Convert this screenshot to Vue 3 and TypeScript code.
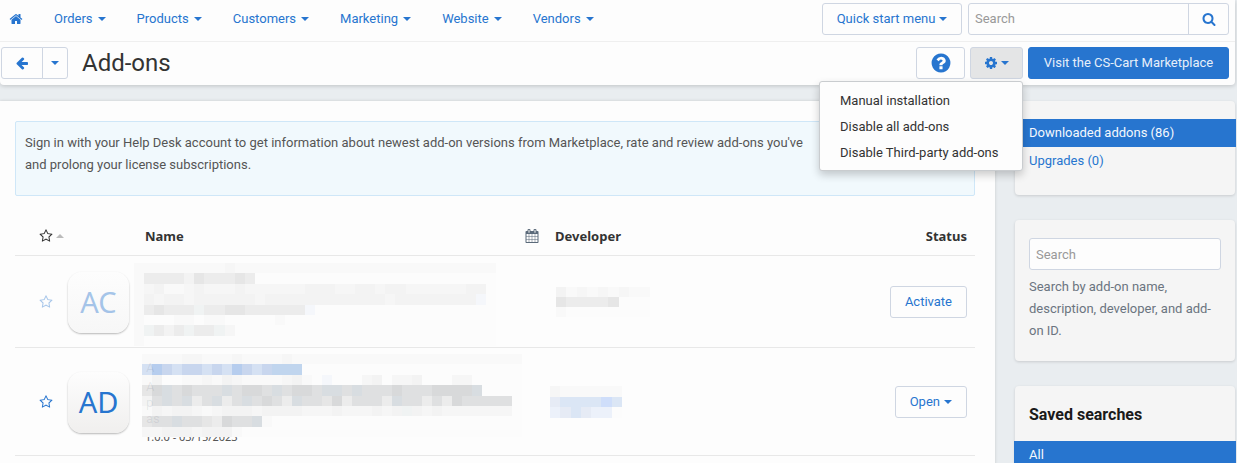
<script setup lang="ts">
import { ref } from 'vue'

type Mosaic = { cols: number; rows: string[] }

const menus: string[] = ['Orders', 'Products', 'Customers', 'Marketing', 'Website', 'Vendors']
const tools: string[] = ['Manual installation', 'Disable all add-ons', 'Disable Third-party add-ons']
const quickSearch = ref('')
const addonSearch = ref('')

const palette: Record<string, string> = {
  w: '#fcfcfc', a: '#f9f9f9', b: '#f6f6f6', c: '#f3f3f3', d: '#ececec', e: '#e6e6e6',
  f: '#dfe0e1', g: '#d8d9da', h: '#d8dde1', t: '#f0f3f3', l: '#f5f7fb',
  '1': '#b6cdee', '2': '#c8d6ee', '3': '#d5e1f3', '4': '#c0d5ee',
  '5': '#dbe6f5', '6': '#e6ebf5', '7': '#ecf1fa', '8': '#cfdefa',
}

const nameFirst: Mosaic = {
  cols: 36,
  rows: [
    'aaaaaaaaabaaaaaaaaaaaaaaaaaaaaaaaaaa',
    'addddcedddedwwwwwwwwwwwwwwwwwwwwwwww',
    'abcaabcbbbcbbbbbbcccbbccbccbbbbbbccw',
    'acbccbccccccbccccccccccccbccccccccl'.padEnd(36, 'w'),
    'adedddtddeeddddddlwwwwwwwwwwwwwwwwww',
    'awwwaawaawwwwwawwwwwwwwwwwwwwwwwwwww',
    'atdcdtddtbwwwwwwwwwwwwwwwwwwwwwwwwww',
    'awwwwwwwwwwwwwwwwwwwwwwwwwwwwwwwwwww',
  ],
}
const nameSecond: Mosaic = {
  cols: 38,
  rows: [
    'aaaabbaaabaaaabaaaaaaaaaaaaaaaaaaaaaaa',
    '3123223231232444' + 'w'.repeat(22),
    'acwwaabacbaaaabcawlwwwbcwbbcwwwbbwwwww',
    'eghfgfffhfggfhfggfhhfhfffgfffgggghwwww',
    'cfhfhdfhdfhfgfdhffegdfffdhffdfdgfffffw',
    'acbccbabcccbccccbbbcbbbcbctcbcbbbbbbbw',
    'effhffedgffhawwwwwwwwwwwwwwwwwwwwwwwww',
    'bbcccbcccawwwwwwwwwwwwwwwwwwwwwwwwwwww',
  ],
}
const devFirst: Mosaic = { cols: 9, rows: ['cabababaa', 'eddddewww', 'awwwwwwww'] }
const devSecond: Mosaic = { cols: 7, rows: ['baaaaaa', '6555585', '765677w'] }

const rowsData = [
  { initials: 'AC', active: false, action: 'Activate', caret: false, version: '', name: nameFirst, dev: devFirst, key: 'first', hints: [] as [string, number][] },
  { initials: 'AD', active: true, action: 'Open', caret: true, version: '1.0.0 - 03/15/2023', name: nameSecond, dev: devSecond, key: 'second', hints: [['A', 18], ['A', 37], ['p', 53], ['as', 69]] as [string, number][] },
]

const star = 'M1201 1004l306-297-422-62-189-382-189 382-422 62 306 297-73 421 378-199 377 199zm527-357q0 22-26 48l-363 354 86 500q1 7 1 20 0 50-41 50-19 0-40-12l-449-236-449 236q-22 12-40 12-21 0-31.5-14.5t-10.5-35.5q0-6 2-20l86-500-364-354q-25-27-25-48 0-37 56-46l502-73 225-455q19-41 49-41t49 41l225 455 502 73q56 9 56 46z'
</script>

<template>
  <div class="page">
    <header class="header">
      <div class="topbar">
        <nav class="nav">
          <a class="home" href="#" aria-label="Home">
            <svg class="ico14" viewBox="0 0 1792 1792"><path d="M1472 992v480q0 26-19 45t-45 19h-384v-384h-256v384h-384q-26 0-45-19t-19-45v-480q0-1 .5-3t.5-3l575-474 575 474q1 2 1 6zm223-69l-62 74q-8 9-21 11h-3q-13 0-21-7l-692-577-692 577q-12 8-24 7-13-2-21-11l-62-74q-8-10-7-23.5t11-21.5l719-599q32-26 76-26t76 26l244 204v-195q0-14 9-23t23-9h192q14 0 23 9t9 23v408l219 182q10 8 11 21.5t-7 23.5z" /></svg>
          </a>
          <a v-for="m in menus" :key="m" class="menu" href="#">{{ m }}<i class="caret"></i></a>
        </nav>
        <div class="top-tools">
          <button class="btn quick" type="button">Quick start menu<i class="caret"></i></button>
          <form class="search" @submit.prevent>
            <input v-model="quickSearch" class="field" type="text" placeholder="Search" aria-label="Search">
            <button class="go" type="submit" aria-label="Find">
              <svg class="ico14" viewBox="0 0 1792 1792"><path d="M1216 832q0-185-131.5-316.5t-316.5-131.5-316.5 131.5-131.5 316.5 131.5 316.5 316.5 131.5 316.5-131.5 131.5-316.5zm512 832q0 52-38 90t-90 38q-54 0-90-38l-343-342q-179 124-399 124-143 0-273.5-55.5t-225-150-150-225-55.5-273.5 55.5-273.5 150-225 225-150 273.5-55.5 273.5 55.5 225 150 150 225 55.5 273.5q0 220-124 399l343 343q37 37 37 90z" /></svg>
            </button>
          </form>
        </div>
      </div>
      <div class="actions">
        <div class="back">
          <button class="btn back-main" type="button" aria-label="Back">
            <svg class="ico14" viewBox="0 0 1792 1792"><path d="M1664 896v128q0 53-32.5 90.5t-84.5 37.5h-704l293 294q38 36 38 90t-38 90l-75 76q-37 37-90 37-52 0-91-37l-651-652q-37-37-37-90 0-52 37-91l651-650q38-38 91-38 52 0 90 38l75 74q38 38 38 91t-38 91l-293 293h704q52 0 84.5 37.5t32.5 90.5z" /></svg>
          </button>
          <button class="btn back-more" type="button" aria-label="Recent pages"><i class="caret"></i></button>
        </div>
        <h1 class="title">Add-ons</h1>
        <div class="action-tools">
          <button class="btn help" type="button" aria-label="Help">
            <svg class="ico22" viewBox="0 0 1792 1792"><path d="M1024 1376v-192q0-14-9-23t-23-9h-192q-14 0-23 9t-9 23v192q0 14 9 23t23 9h192q14 0 23-9t9-23zm256-672q0-88-55.5-163t-138.5-116-170-41q-243 0-371 213-15 24 8 42l132 100q7 6 19 6 16 0 25-12 53-68 86-92 34-24 86-24 48 0 85.5 26t37.5 59q0 38-20 61t-68 45q-63 28-115.5 86.5t-52.5 125.5v36q0 14 9 23t23 9h192q14 0 23-9t9-23q0-19 21.5-49.5t54.5-49.5q32-18 49-28.5t46-35 44.5-48 28-60.5 12.5-81zm384 192q0 209-103 385.5t-279.5 279.5-385.5 103-385.5-103-279.5-279.5-103-385.5 103-385.5 279.5-279.5 385.5-103 385.5 103 279.5 279.5 103 385.5z" /></svg>
          </button>
          <div class="gear-wrap">
            <button class="btn gear" type="button" aria-label="Tools" aria-expanded="true">
              <svg class="ico14" viewBox="0 0 1792 1792"><path d="M1152 896q0-106-75-181t-181-75-181 75-75 181 75 181 181 75 181-75 75-181zm512-109v222q0 12-8 23t-20 13l-185 28q-19 54-39 91 35 50 107 138 10 12 10 25t-9 23q-27 37-99 108t-94 71q-12 0-26-9l-138-108q-44 23-91 38-16 136-29 186-7 28-36 28h-222q-14 0-24.5-8.5t-11.5-21.5l-28-184q-49-16-90-37l-141 107q-10 9-25 9-14 0-25-11-126-114-165-168-7-10-7-23 0-12 8-23 15-21 51-66.5t54-70.5q-27-50-41-99l-183-27q-13-2-21-12.5t-8-23.5v-222q0-12 8-23t19-13l186-28q14-46 39-92-40-57-107-138-10-12-10-24 0-10 9-23 26-36 98.5-107.5t94.5-71.5q13 0 26 10l138 107q44-23 91-38 16-136 29-186 7-28 36-28h222q14 0 24.5 8.5t11.5 21.5l28 184q49 16 90 37l142-107q9-9 24-9 13 0 25 10 129 119 165 170 7 8 7 22 0 12-8 23-15 21-51 66.5t-54 70.5q26 50 41 98l183 28q13 2 21 12.5t8 23.5z" /></svg>
              <i class="caret"></i>
            </button>
            <ul class="dropdown">
              <li v-for="t in tools" :key="t"><a href="#">{{ t }}</a></li>
            </ul>
          </div>
          <a class="btn primary" href="#">Visit the CS-Cart Marketplace</a>
        </div>
      </div>
    </header>

    <div class="body">
      <main class="main">
        <p class="notice">Sign in with your Help Desk account to get information about newest add-on versions from Marketplace, rate and review add-ons you've<br>and prolong your license subscriptions.</p>
        <table class="addons">
          <colgroup>
            <col class="c-star"><col class="c-icon"><col><col class="c-date"><col class="c-dev"><col class="c-status">
          </colgroup>
          <thead>
            <tr>
              <th class="star-cell">
                <a class="sort" href="#" aria-label="Favorites"><svg class="ico14" viewBox="0 0 1792 1792"><path :d="star" /></svg><i class="caret up"></i></a>
              </th>
              <th></th>
              <th class="name-head">Name</th>
              <th>
                <svg class="ico14 cal" viewBox="0 0 1792 1792"><path d="M192 1664h288v-288h-288v288zm352 0h320v-288h-320v288zm-352-352h288v-320h-288v320zm352 0h320v-320h-320v320zm-352-384h288v-288h-288v288zm736 736h320v-288h-320v288zm-384-736h320v-288h-320v288zm768 736h288v-288h-288v288zm-384-352h320v-320h-320v320zm-352-864v-288q0-13-9.5-22.5t-22.5-9.5h-64q-13 0-22.5 9.5t-9.5 22.5v288q0 13 9.5 22.5t22.5 9.5h64q13 0 22.5-9.5t9.5-22.5zm736 864h288v-320h-288v320zm-384-384h320v-288h-320v288zm384 0h288v-288h-288v288zm32-480v-288q0-13-9.5-22.5t-22.5-9.5h-64q-13 0-22.5 9.5t-9.5 22.5v288q0 13 9.5 22.5t22.5 9.5h64q13 0 22.5-9.5t9.5-22.5zm384-64v1280q0 52-38 90t-90 38h-1408q-52 0-90-38t-38-90v-1280q0-52 38-90t90-38h128v-96q0-66 47-113t113-47h64q66 0 113 47t47 113v96h384v-96q0-66 47-113t113-47h64q66 0 113 47t47 113v96h128q52 0 90 38t38 90z" /></svg>
              </th>
              <th class="dev-head">Developer</th>
              <th class="status">Status</th>
            </tr>
          </thead>
          <tbody>
            <tr v-for="r in rowsData" :key="r.key" :class="[r.key, { disabled: !r.active }]">
              <td class="star-cell">
                <button class="fav" type="button" aria-label="Add to favorites"><svg class="ico14" viewBox="0 0 1792 1792"><path :d="star" /></svg></button>
              </td>
              <td><div class="app-icon"><span>{{ r.initials }}</span></div></td>
              <td class="name-cell">
                <svg class="mosaic name-mosaic" :viewBox="`0 0 ${r.name.cols * 10} 83`" preserveAspectRatio="none">
                  <template v-for="(line, y) in r.name.rows" :key="y">
                    <rect v-for="(ch, x) in line.split('')" :key="x" :x="x * 10" :y="Math.round(y * 83 / 8)" width="10" height="11" :fill="palette[ch]" />
                  </template>
                  <text v-for="(h, i) in r.hints" :key="'h' + i" class="hint" x="4" :y="h[1]">{{ h[0] }}</text>
                </svg>
                <div v-if="r.version" class="version">{{ r.version }}</div>
              </td>
              <td></td>
              <td class="dev-cell">
                <svg class="mosaic dev-mosaic" :viewBox="`0 0 ${r.dev.cols} 3`" preserveAspectRatio="none">
                  <template v-for="(line, y) in r.dev.rows" :key="y">
                    <rect v-for="(ch, x) in line.split('')" :key="x" :x="x" :y="y" width="1" height="1" :fill="palette[ch]" />
                  </template>
                </svg>
              </td>
              <td class="status"><button class="btn" type="button">{{ r.action }}<i v-if="r.caret" class="caret"></i></button></td>
            </tr>
          </tbody>
        </table>
      </main>

      <aside class="side">
        <section class="box links">
          <a class="item current" href="#">Downloaded addons (86)</a>
          <a class="item" href="#">Upgrades (0)</a>
        </section>
        <section class="box finder">
          <input id="addon-search" v-model="addonSearch" class="field boxed" type="text" placeholder="Search">
          <label for="addon-search">Search by add-on name, description, developer, and add-<wbr>on ID.</label>
        </section>
        <section class="box saved">
          <h2>Saved searches</h2>
          <a class="item current" href="#">All</a>
        </section>
      </aside>
    </div>
  </div>
</template>

<style>
html { background: #e9edf0; scrollbar-width: none; }
</style>

<style scoped>
* { box-sizing: border-box; }
.page { min-height: 100vh; display: flex; flex-direction: column; background: #e9edf0; font-family: Roboto, "Noto Sans", sans-serif; font-size: 13px; line-height: 22px; color: #333; }
a { color: #2775cf; text-decoration: none; }
svg { fill: currentColor; display: block; }
button, input { font: inherit; }
.ico14 { width: 14px; height: 14px; }
.ico22 { width: 22px; height: 22px; }
.caret { display: inline-block; border: 4px solid transparent; border-top-color: currentColor; border-bottom: 0; margin-left: 5px; vertical-align: middle; }
.caret.up { border-top: 0; border-bottom: 4px solid #bbb; margin-left: 3px; }

.header { position: relative; z-index: 2; margin-right: 2px; background: #fdfdfd; border-radius: 0 0 4px 4px; box-shadow: 0 1px 4px rgba(0, 0, 0, .18); }
.topbar { display: flex; justify-content: space-between; align-items: center; height: 42px; padding: 0 6px 4px 9px; border-bottom: 1px solid #efefef; }
.nav { display: flex; align-items: center; gap: 31px; }
.home { display: block; }
.top-tools, .action-tools { display: flex; gap: 6px; }
.btn { display: inline-flex; align-items: center; justify-content: center; height: 32px; padding: 0 14px; background: #fdfdfd; border: 1px solid #cfd6e2; border-radius: 3px; color: #2775cf; white-space: nowrap; }
.btn .caret { margin-left: 4px; }
.quick { width: 140px; }
.search { display: flex; width: 261px; height: 32px; border: 1px solid #cfd6e2; border-radius: 3px; background: #fdfdfd; }
.field { flex: 1; min-width: 0; height: 100%; border: 0; padding: 0 6px; background: transparent; color: #333; outline: 0; }
.field::placeholder { color: #999; opacity: 1; }
.go { width: 40px; padding: 0; display: flex; align-items: center; justify-content: center; background: transparent; border: 0; border-left: 1px solid #cfd6e2; color: #2775cf; }

.actions { display: flex; align-items: center; height: 43px; padding: 0 6px 2px 1px; }
.back { display: flex; }
.back-main { width: 42px; padding: 0; border-radius: 3px 0 0 3px; }
.back-more { width: 26px; padding: 0; margin-left: -1px; border-radius: 0 3px 3px 0; }
.back-more .caret { margin: 0; }
.title { flex: 1; margin: 0 0 0 14px; font-size: 24px; line-height: 32px; font-weight: 400; color: #333; }
.action-tools { gap: 5px; }
.help { width: 49px; padding: 0; }
.gear-wrap { position: relative; }
.gear { width: 53px; padding: 0; background: #e4e5e6; }
.gear .caret { margin-left: 3px; }
.primary { width: 201px; padding: 0; background: #2775cf; border-color: #2775cf; color: #e6effa; }
.dropdown { position: absolute; top: 34px; right: 0; width: 204px; margin: 0; padding: 6px 0 4px; list-style: none; background: #fdfdfd; border: 1px solid #c9cccf; border-radius: 3px; box-shadow: 0 4px 9px rgba(0, 0, 0, .2); }
.dropdown a { display: block; padding: 2px 0 2px 20px; color: #333; white-space: nowrap; }

.body { flex: 1; display: flex; gap: 20px; margin-top: 16px; padding-right: 2px; }
.main { flex: 1; min-width: 0; padding: 20px 20px 0 15px; background: #fdfdfd; box-shadow: 0 0 3px rgba(0, 0, 0, .15); }
.notice { margin: 0; height: 75px; padding: 10px 9px; background: #f1f9fd; border: 1px solid #cfe7f8; border-radius: 2px; color: #555; white-space: nowrap; overflow: hidden; }
.addons { width: 100%; margin-top: 22px; border-collapse: collapse; table-layout: fixed; }
.c-star { width: 53px; }
.c-icon { width: 66px; }
.c-date { width: 30px; }
.c-dev { width: 240px; }
.c-status { width: 187px; }
th, td { padding: 0; text-align: left; border-bottom: 1px solid #e8e8e8; }
th { height: 37px; font-family: "Noto Sans", sans-serif; font-weight: 700; color: #333; }
td { padding-top: 2px; }
.star-cell { padding-left: 24px; }
.sort { display: flex; align-items: center; color: #333; }
.name-head { padding-left: 11px; }
.cal { margin-left: 7px; color: #5b6a7a; }
.dev-head { padding-left: 7px; }
th.status, td.status { text-align: right; padding-right: 8px; }
.first td { height: 92px; }
.second td { height: 108px; }
.fav { display: block; padding: 0; border: 0; background: none; color: #2775cf; }
.disabled .fav, .disabled .app-icon span { opacity: .4; }
.app-icon { display: flex; align-items: center; justify-content: center; width: 61px; height: 61px; border-radius: 14px; background: linear-gradient(#fdfdfd, #f0efee); box-shadow: 0 1px 2px rgba(0, 0, 0, .28); color: #2775cf; font-family: "Noto Sans", sans-serif; font-size: 29px; }
.disabled .app-icon { background: linear-gradient(#fdfdfd, #f7f7f7); }
td.name-cell { vertical-align: top; padding-top: 7px; }
.second td.name-cell { padding: 6px 0 0 8px; }
.mosaic { position: relative; z-index: 1; shape-rendering: crispEdges; }
.name-mosaic { width: 362px; height: 83px; }
.second .name-mosaic { width: 380px; }
.hint { font-size: 13px; fill: rgba(90, 100, 120, .12); }
.version { margin: -8px 0 0 3px; font-family: "Noto Sans", sans-serif; font-size: 11px; line-height: 16px; color: #555; }
.dev-cell { padding-left: 8px; }
.second .dev-cell { padding-left: 2px; }
.dev-mosaic { width: 94px; height: 30px; }
.second .dev-mosaic { width: 72px; height: 32px; }

.side { width: 220px; display: flex; flex-direction: column; gap: 25px; }
.box { background: #f5f5f5; border-radius: 4px; box-shadow: 0 1px 3px rgba(0, 0, 0, .14); }
.item { display: block; margin: 0 -1px; padding: 3px 15px; }
.item.current { background: #2775cf; color: #f4f8fd; }
.links { padding: 18px 0 20px; }
.finder { padding: 18px 14px 19px; color: #6b7480; }
.finder label { display: block; margin-top: 6px; }
.boxed { display: block; width: 100%; height: 32px; border: 1px solid #cfd6e2; border-radius: 3px; background: #fdfdfd; }
.saved { padding: 18px 0; }
.saved h2 { margin: 0; padding: 0 14px 15px; font-size: 16px; line-height: 22px; font-weight: 700; color: #1a1a1a; }
</style>
